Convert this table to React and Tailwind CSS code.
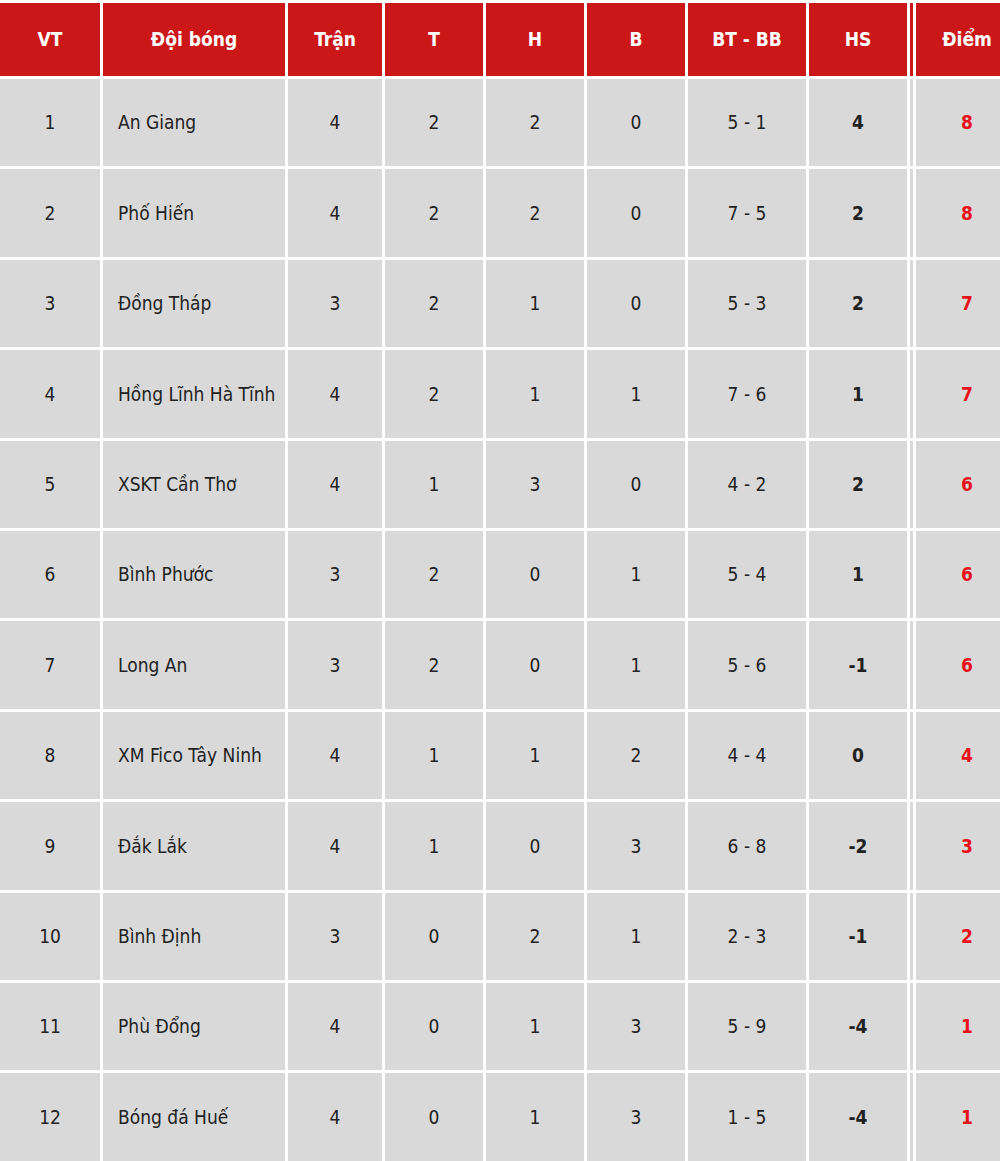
const teams = [
  [1, 'An Giang', 4, 2, 2, 0, '5 - 1', 4, 8],
  [2, 'Phố Hiến', 4, 2, 2, 0, '7 - 5', 2, 8],
  [3, 'Đồng Tháp', 3, 2, 1, 0, '5 - 3', 2, 7],
  [4, 'Hồng Lĩnh Hà Tĩnh', 4, 2, 1, 1, '7 - 6', 1, 7],
  [5, 'XSKT Cần Thơ', 4, 1, 3, 0, '4 - 2', 2, 6],
  [6, 'Bình Phước', 3, 2, 0, 1, '5 - 4', 1, 6],
  [7, 'Long An', 3, 2, 0, 1, '5 - 6', -1, 6],
  [8, 'XM Fico Tây Ninh', 4, 1, 1, 2, '4 - 4', 0, 4],
  [9, 'Đắk Lắk', 4, 1, 0, 3, '6 - 8', -2, 3],
  [10, 'Bình Định', 3, 0, 2, 1, '2 - 3', -1, 2],
  [11, 'Phù Đổng', 4, 0, 1, 3, '5 - 9', -4, 1],
  [12, 'Bóng đá Huế', 4, 0, 1, 3, '1 - 5', -4, 1],
];

const headers = ['VT', 'Đội bóng', 'Trận', 'T', 'H', 'B', 'BT - BB', 'HS'];

export default function App() {
  return (
    <div className="w-[1000px] h-[1161px] overflow-hidden bg-white pt-[3px] font-['DejaVu_Sans_Condensed','DejaVu_Sans',sans-serif]">
      <div className="w-[1018px] grid grid-cols-[100px_182px_94px_98px_98px_98px_118px_98px_3px_102px] grid-rows-[73px_repeat(12,87.4px)] gap-[3px] text-[19px]">
        {headers.map((h) => (
          <div key={h} className="bg-[#cc1719] text-white font-bold flex items-center justify-center">
            {h}
          </div>
        ))}
        <div className="bg-[#cc1719]" />
        <div className="bg-[#cc1719] text-white font-bold flex items-center justify-center">Điểm</div>

        {teams.map((t) => (
          <Row key={t[0]} t={t} />
        ))}
      </div>
    </div>
  );
}

function Row({ t }) {
  const [vt, name, tran, w, d, l, goals, hs, pts] = t;
  const cell = 'bg-[#d9d9d9] text-[#222] flex items-center justify-center';
  return (
    <>
      <div className={cell}>{vt}</div>
      <div className="bg-[#d9d9d9] text-[#222] flex items-center pl-[15px] whitespace-nowrap">{name}</div>
      <div className={cell}>{tran}</div>
      <div className={cell}>{w}</div>
      <div className={cell}>{d}</div>
      <div className={cell}>{l}</div>
      <div className={cell}>{goals}</div>
      <div className={cell + ' font-bold'}>{hs}</div>
      <div className="bg-[#d9d9d9]" />
      <div className="bg-[#d9d9d9] text-[#e8121c] font-bold flex items-center justify-center">{pts}</div>
    </>
  );
}
